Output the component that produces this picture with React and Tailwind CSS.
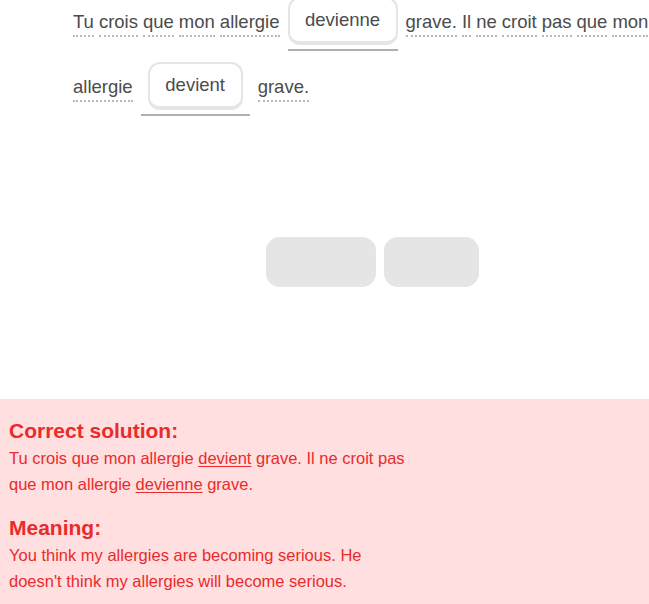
import React from "react";

const FONT = { fontFamily: '"Liberation Sans", Arial, sans-serif' };

const Word = ({ children }) => (
  <span className="border-b-2 border-dotted border-[#b8b8b8] pb-px leading-6 whitespace-nowrap">
    {children}
  </span>
);

const Slot = ({ width, chipWidth, children }) => (
  <div className={`flex flex-col items-center ${width} mx-[3px]`}>
    <div
      className={`${chipWidth} h-[48px] flex items-center justify-center rounded-xl border-2 border-b-4 border-[#e5e5e5] bg-white text-[#4b4b4b]`}
    >
      {children}
    </div>
    <div className="mt-[4px] h-[2px] w-full bg-[#afafaf]" />
  </div>
);

const words = (text) => text.split(" ").map((w, i) => <Word key={i}>{w}</Word>);

export default function App() {
  return (
    <div className="h-[604px] w-full overflow-hidden bg-white flex flex-col" style={FONT}>
      {/* sentence with blanks */}
      <div className="-mt-[9px] pl-[73px] text-[18.5px] text-[#4b4b4b]">
        <div className="h-[65px] flex items-center gap-[5px] whitespace-nowrap">
          {words("Tu crois que mon allergie")}
          <Slot width="w-[110px]" chipWidth="w-[110px]">devienne</Slot>
          {words("grave. Il ne croit pas que mon")}
        </div>
        <div className="h-[65px] flex items-center gap-[5px] whitespace-nowrap">
          {words("allergie")}
          <Slot width="w-[109px]" chipWidth="w-[95px]">devient</Slot>
          {words("grave.")}
        </div>
      </div>

      {/* empty word bank */}
      <div className="mt-[116px] pl-[266px] flex gap-2">
        <div className="w-[110px] h-[50px] rounded-[14px] bg-[#e5e5e5]" />
        <div className="w-[95px] h-[50px] rounded-[14px] bg-[#e5e5e5]" />
      </div>

      {/* feedback */}
      <div className="mt-auto h-[205px] bg-[#ffdfe0] pt-[18px] pl-[9px] text-[#ea2b2b]">
        <h2 className="text-[21px] leading-[28px] font-bold">Correct solution:</h2>
        <p className="w-[404px] text-[16.5px] leading-[26px]">
          Tu crois que mon allergie <span className="underline underline-offset-2">devient</span> grave. Il ne croit pas que mon allergie{" "}
          <span className="underline underline-offset-2">devienne</span> grave.
        </p>
        <h2 className="mt-[17px] text-[21px] leading-[28px] font-bold">Meaning:</h2>
        <p className="w-[404px] text-[16.5px] leading-[26px]">
          You think my allergies are becoming serious. He doesn't think my allergies will become serious.
        </p>
      </div>
    </div>
  );
}
